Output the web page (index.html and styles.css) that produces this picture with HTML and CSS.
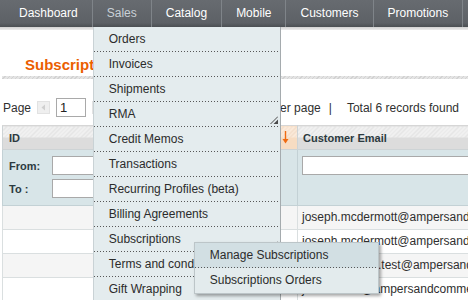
FILE: index.html
```html
<!DOCTYPE html>
<html lang="en">
<head>
  <meta charset="UTF-8">
  <title>Subscriptions</title>
  <link rel="stylesheet" href="styles.css">
</head>
<body>
  <div class="nav">
    <ul class="nav-list">
      <li class="nav-item">Dashboard</li>
      <li class="nav-item active">Sales
        <ul class="dropdown">
          <li>Orders</li>
          <li>Invoices</li>
          <li>Shipments</li>
          <li class="parent">RMA
            <svg class="sub-icon" width="8" height="8" viewBox="0 0 8 8"><path d="M0.5 8L8 0.5" stroke="#4a4a4a" stroke-width="1"/><path d="M3.5 8L8 3.5V8Z" fill="#4a4a4a"/></svg>
          </li>
          <li>Credit Memos</li>
          <li>Transactions</li>
          <li>Recurring Profiles (beta)</li>
          <li>Billing Agreements</li>
          <li class="parent">Subscriptions
            <svg class="sub-icon" width="8" height="8" viewBox="0 0 8 8"><path d="M0.5 8L8 0.5" stroke="#4a4a4a" stroke-width="1"/><path d="M3.5 8L8 3.5V8Z" fill="#4a4a4a"/></svg>
            <ul class="submenu">
              <li class="over">Manage Subscriptions</li>
              <li>Subscriptions Orders</li>
            </ul>
          </li>
          <li>Terms and conditions</li>
          <li>Gift Wrapping</li>
        </ul>
      </li>
      <li class="nav-item">Catalog</li>
      <li class="nav-item">Mobile</li>
      <li class="nav-item">Customers</li>
      <li class="nav-item">Promotions</li>
      <li class="nav-item">Newsletter</li>
    </ul>
  </div>
  <div class="nav-line"></div>

  <div class="main">
    <div class="content-header">
      <h3 class="page-title">Subscriptions</h3>
    </div>
    <div class="header-bar"></div>

    <div class="pager">
      <span>Page</span>
      <span class="pager-btn">
        <svg width="13" height="13" viewBox="0 0 13 13"><path d="M8 3.5L4.5 6.5L8 9.5Z" fill="#cfcfcf"/></svg>
      </span>
      <input class="page-input" type="text" value="1">
      <span class="pager-btn">
        <svg width="13" height="13" viewBox="0 0 13 13"><path d="M5 3.5L8.5 6.5L5 9.5Z" fill="#cfcfcf"/></svg>
      </span>
      <span>of 1 pages</span>
      <div class="pager-right">
        <span>View</span>
        <select class="limit"><option>20</option></select>
        <span>per page</span>
        <span class="sep">|</span>
        <span>Total 6 records found</span>
      </div>
    </div>

    <table class="grid">
      <colgroup>
        <col class="c-id">
        <col class="c-order">
        <col class="c-date">
        <col class="c-email">
        <col class="c-status">
      </colgroup>
      <thead>
        <tr class="headings">
          <th>ID</th>
          <th>Order #</th>
          <th class="sorted">Created
            <svg class="sort-arrow" width="7" height="13" viewBox="0 0 7 13"><path d="M3.5 0V9" stroke="#f06a10" stroke-width="1.4"/><path d="M0.5 8H6.5L3.5 12.5Z" fill="#f06a10"/></svg>
          </th>
          <th>Customer Email</th>
          <th>Status</th>
        </tr>
        <tr class="filter">
          <td>
            <div class="range">
              <label>From:</label><input type="text">
              <label>To :</label><input type="text">
            </div>
          </td>
          <td><input class="filter-input" type="text"></td>
          <td>
            <div class="date-range">
              <input type="text">
              <input type="text">
            </div>
          </td>
          <td><input class="filter-input" type="text"></td>
          <td><input class="filter-input" type="text"></td>
        </tr>
      </thead>
      <tbody>
        <tr>
          <td class="num">6</td><td>100000031</td><td>3/4/13</td>
          <td>joseph.mcdermott@ampersandcommerce.com</td><td>Active</td>
        </tr>
        <tr>
          <td class="num">5</td><td>100000029</td><td>3/1/13</td>
          <td>joseph.mcdermott@ampersandcommerce.com</td><td>Active</td>
        </tr>
        <tr>
          <td class="num">4</td><td>100000027</td><td>2/27/13</td>
          <td>joe.mcdermott.test@ampersandcommerce.com</td><td>Active</td>
        </tr>
        <tr>
          <td class="num">3</td><td>100000024</td><td>2/25/13</td>
          <td>jmcdermott@ampersandcommerce.com</td><td>Active</td>
        </tr>
      </tbody>
    </table>
  </div>
</body>
</html>
```

FILE: styles.css
```css
html, body {
  overflow: hidden;
}
body {
  margin: 0;
  font-family: "Liberation Sans", Arial, sans-serif;
  font-size: 12px;
  color: #2f2f2f;
  background: #fff;
}
ul {
  list-style: none;
  margin: 0;
  padding: 0;
}

/* top navigation */
.nav {
  height: 27px;
  background: linear-gradient(#676b70, #5d6166 85%, #4b4f53);
}
.nav-list {
  display: flex;
  height: 27px;
  padding-left: 5px;
}
.nav-item {
  position: relative;
  padding: 0 14px;
  line-height: 27px;
  color: #fff;
  border-right: 1px solid #7f8489;
  white-space: nowrap;
}
.nav-item.active {
  color: #c9d1d7;
}
.nav-line {
  height: 3px;
  background: linear-gradient(#d2d2d2, #ececec);
}

/* sales dropdown */
.dropdown {
  position: absolute;
  top: 27px;
  left: 0;
  width: 186px;
  background: #e4ecee;
  border-left: 1px solid #c9d2d5;
  border-right: 1px solid #a5abae;
  color: #2b2b2b;
  z-index: 10;
}
.dropdown li {
  position: relative;
  height: 25px;
  line-height: 25px;
  padding-left: 15px;
  background: linear-gradient(to right, #575757 1px, transparent 1px) left bottom / 3px 1px repeat-x;
}
.sub-icon {
  position: absolute;
  right: 2px;
  bottom: 3px;
}
.submenu {
  position: absolute;
  top: 15px;
  left: 100px;
  width: 183px;
  background: #e3ebed;
  border: 1px solid #bcc5c8;
  box-shadow: 2px 2px 3px rgba(0, 0, 0, 0.35);
  z-index: 11;
}
.submenu .over {
  background-color: #d2dfe3;
}
.submenu li:last-child {
  background-image: none;
}

/* page */
.main {
  padding-left: 2px;
}
.content-header {
  margin-top: 26px;
  padding: 0 0 2px 23px;
}
.page-title {
  margin: 0;
  font-size: 15px;
  line-height: 18px;
  font-weight: bold;
  color: #eb5e00;
}
.header-bar {
  height: 3px;
  background: repeating-linear-gradient(135deg, #e4e4e4 0 2px, #d2d2d2 2px 3px);
}

.pager {
  display: flex;
  align-items: center;
  height: 19px;
  margin-top: 19px;
  padding: 0 9px 0 1px;
  white-space: nowrap;
}
.pager > * {
  margin-right: 6px;
}
.pager-btn {
  width: 13px;
  height: 13px;
  background: #efefef;
  box-shadow: inset 0 0 0 1px #e2e2e2;
}
.pager-btn svg {
  display: block;
}
.page-input {
  width: 30px;
  height: 19px;
  box-sizing: border-box;
  padding: 0 3px;
  border: 1px solid #a9a9a9;
  font: 13px "Liberation Sans", Arial, sans-serif;
  color: #222;
}
.pager-right {
  display: flex;
  align-items: center;
  margin-left: auto;
  margin-right: 0;
}
.pager-right > * {
  margin-left: 6px;
}
.pager-right .sep {
  margin: 0 9px 0 8px;
}
.limit {
  font-size: 11px;
}

/* grid */
.grid {
  border-collapse: collapse;
  table-layout: fixed;
  width: 655px;
  margin-top: 8px;
}
.c-id { width: 150px; }
.c-order { width: 72px; }
.c-date { width: 73px; }
.c-email { width: 260px; }
.c-status { width: 100px; }

.headings th {
  height: 23px;
  padding: 0 5px;
  text-align: left;
  font-size: 11px;
  font-weight: bold;
  color: #2c3a40;
  white-space: nowrap;
  overflow: hidden;
  border: 1px solid #cdd3d5;
  border-top-color: #d6d6d6;
  background:
    linear-gradient(transparent 0 48%, #dcdcdc 48%),
    repeating-linear-gradient(135deg, #f1f1f1 0 2px, #e3e3e3 2px 3px);
}
.headings th:first-child {
  padding-left: 6px;
}
.headings .sorted {
  position: relative;
  background:
    linear-gradient(transparent 0 48%, #f7dcc2 48%),
    repeating-linear-gradient(135deg, #fbeadb 0 2px, #f3dcc8 2px 3px);
}
.sort-arrow {
  position: absolute;
  right: 8px;
  top: 5px;
}

.filter td {
  padding: 6px 4px 7px 4px;
  height: 42px;
  vertical-align: top;
  background: #d8e5e8;
  border: 1px solid #c3d1d5;
}
.filter td:first-child {
  padding-left: 6px;
}
.range {
  display: grid;
  grid-template-columns: 43px 1fr;
  row-gap: 4px;
  align-items: center;
}
.range label {
  font-size: 11px;
  font-weight: bold;
  color: #2c3a40;
}
.range input,
.date-range input,
.filter-input {
  width: 100%;
  height: 19px;
  box-sizing: border-box;
  border: 1px solid #a9a9a9;
  background: #fff;
  display: block;
}
.date-range {
  display: flex;
  flex-direction: column;
  gap: 4px;
  width: 45px;
}

.grid tbody td {
  height: 23px;
  padding: 0 4px;
  line-height: 23px;
  white-space: nowrap;
  overflow: hidden;
  border: 1px solid #dadfe0;
  color: #2f2f2f;
}
.grid tbody tr:nth-child(odd) td {
  background: #f5f5f5;
}
.grid tbody .num {
  text-align: right;
}
```
